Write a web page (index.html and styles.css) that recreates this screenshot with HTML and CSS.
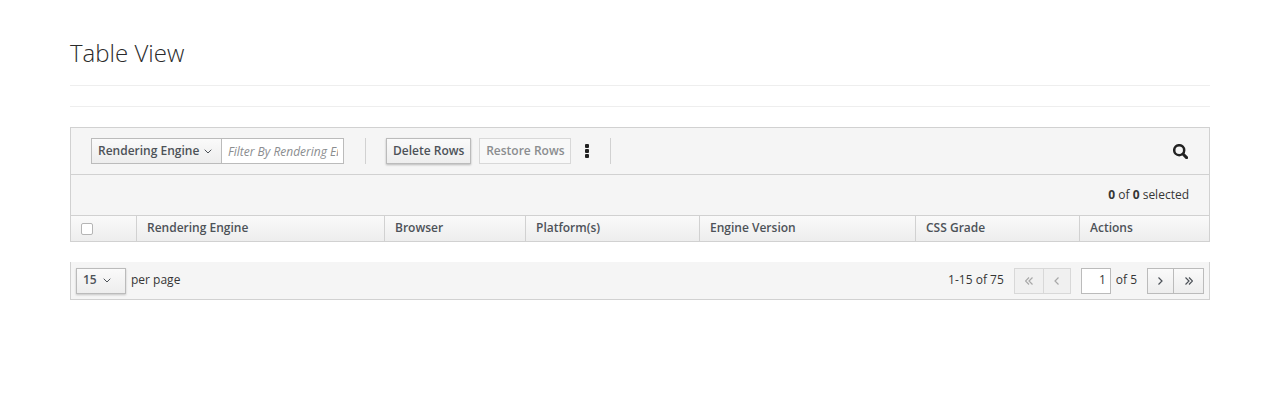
FILE: index.html
```html
<!DOCTYPE html>
<html lang="en">
<head>
    <meta charset="UTF-8">
    <title>Table View</title>
    <link rel="stylesheet" href="styles.css">
</head>
<body>
    <div class="page">
        <h1 class="page-title">Table View</h1>
        <div class="rule"></div>

        <div class="table-view">
            <div class="toolbar">
                <div class="filter">
                    <button class="filter-select">Rendering Engine
                        <svg class="caret" width="8" height="5" viewBox="0 0 8 5"><path d="M.7 .7l3.3 3.3 3.3-3.3" fill="none" stroke="#4d5258" stroke-width="1"/></svg>
                    </button>
                    <input class="filter-input" type="text" placeholder="Filter By Rendering Engine">
                </div>
                <div class="divider"></div>
                <button class="btn btn-active">Delete Rows</button>
                <button class="btn btn-disabled">Restore Rows</button>
                <svg class="kebab" width="4" height="14" viewBox="0 0 4 14"><rect width="4" height="4" rx="1" fill="#222"/><rect y="5" width="4" height="4" rx="1" fill="#222"/><rect y="10" width="4" height="4" rx="1" fill="#222"/></svg>
                <div class="divider"></div>
                <svg class="search" width="15" height="15" viewBox="0 0 15 15"><circle cx="6.2" cy="6.2" r="5" fill="none" stroke="#222" stroke-width="2.5"/><path d="M10 10l3.6 3.6" stroke="#222" stroke-width="3" stroke-linecap="round"/></svg>
            </div>
            <div class="selected-row"><span><b>0</b> of <b>0</b> selected</span></div>
            <div class="table-head">
                <div class="cell cell-check"><span class="checkbox"></span></div>
                <div class="cell cell-engine">Rendering Engine</div>
                <div class="cell cell-browser">Browser</div>
                <div class="cell cell-platform">Platform(s)</div>
                <div class="cell cell-version">Engine Version</div>
                <div class="cell cell-grade">CSS Grade</div>
                <div class="cell cell-actions">Actions</div>
            </div>
        </div>

        <div class="pagination">
            <button class="per-page">15
                <svg class="caret" width="8" height="5" viewBox="0 0 8 5"><path d="M.7 .7l3.3 3.3 3.3-3.3" fill="none" stroke="#4d5258" stroke-width="1"/></svg>
            </button>
            <span class="per-page-label">per page</span>
            <span class="range">1-15 of 75</span>
            <div class="pager pager-off">
                <button class="pager-first"><svg width="8" height="8" viewBox="0 0 8 8"><path d="M4 .5L.5 4 4 7.5M7.5 .5L4 4l3.5 3.5" fill="none" stroke="#a8a8a8" stroke-width="1.2"/></svg></button>
                <button class="pager-prev"><svg width="5" height="8" viewBox="0 0 5 8"><path d="M4.5 .5L1 4l3.5 3.5" fill="none" stroke="#a8a8a8" stroke-width="1.2"/></svg></button>
            </div>
            <input class="page-input" type="text" value="1">
            <span class="page-total">of 5</span>
            <div class="pager">
                <button class="pager-next"><svg width="5" height="8" viewBox="0 0 5 8"><path d="M.5 .5L4 4 .5 7.5" fill="none" stroke="#4d5258" stroke-width="1.2"/></svg></button>
                <button class="pager-last"><svg width="8" height="8" viewBox="0 0 8 8"><path d="M.5 .5L4 4 .5 7.5M4 .5L7.5 4 4 7.5" fill="none" stroke="#4d5258" stroke-width="1.2"/></svg></button>
            </div>
        </div>
    </div>
</body>
</html>
```

FILE: styles.css
```css
body {
    margin: 0;
    background-color: #fff;
    color: #363636;
    font-family: "Open Sans", sans-serif;
    font-size: 12px;
    overflow: hidden;
}

button {
    font-family: inherit;
    font-size: 12px;
    cursor: default;
}

.page {
    padding: 0 70px;
}

.page-title {
    margin: 0;
    height: 86px;
    box-sizing: border-box;
    padding-top: 36px;
    font-size: 24px;
    line-height: 33px;
    font-weight: 300;
    color: #2b2b2b;
    border-bottom: 1px solid #eee;
}

.rule {
    height: 20px;
    border-bottom: 1px solid #eee;
    margin-bottom: 20px;
}

.table-view {
    border: 1px solid #d1d1d1;
    background-color: #f5f5f5;
}

.toolbar {
    display: flex;
    align-items: center;
    height: 46px;
    padding: 0 20px;
    border-bottom: 1px solid #d1d1d1;
}

.filter {
    display: flex;
    height: 26px;
    border: 1px solid #bbb;
    box-sizing: border-box;
}

.filter-select {
    width: 130px;
    padding: 0 0 2px 6px;
    border: 0;
    border-right: 1px solid #bbb;
    background: linear-gradient(#fafafa, #ededed);
    color: #4d5258;
    font-weight: 600;
    text-align: left;
    white-space: nowrap;
}

.caret {
    margin-left: 2px;
    vertical-align: 1px;
}

.filter-input {
    width: 121px;
    box-sizing: border-box;
    padding: 1px 5px 0 6px;
    border: 0;
    background-color: #fff;
    font-family: inherit;
    font-size: 12px;
    font-style: italic;
    outline: none;
}

.filter-input::placeholder {
    color: #8b8d8f;
    opacity: 1;
}

.divider {
    width: 1px;
    height: 26px;
    margin: 0 20px 0 21px;
    background-color: #d1d1d1;
}

.btn {
    height: 26px;
    padding: 0 6px 2px;
    border: 1px solid #bbb;
    font-weight: 600;
    white-space: nowrap;
}

.btn-active {
    background: linear-gradient(#fafafa, #ededed);
    color: #4d5258;
    box-shadow: 0 1px 2px rgba(0, 0, 0, 0.25);
}

.btn-disabled {
    width: 92px;
    margin-left: 8px;
    padding: 0 0 2px;
    border-color: #d8d8d8;
    background-color: #f8f8f8;
    color: #8b8d8f;
}

.kebab {
    margin-left: 14px;
}

.search {
    margin: 1px 1px 0 auto;
}

.selected-row {
    display: flex;
    justify-content: flex-end;
    align-items: center;
    height: 38px;
    padding: 0 20px 2px 0;
    border-bottom: 1px solid #d1d1d1;
}

.selected-row b {
    font-weight: 700;
}

.table-head {
    display: flex;
    height: 25px;
    background: linear-gradient(#fafafa, #ededed);
}

.cell {
    display: flex;
    align-items: center;
    box-sizing: border-box;
    padding: 0 0 2px 10px;
    border-left: 1px solid #d1d1d1;
    color: #4d5258;
    font-weight: 600;
    white-space: nowrap;
}

.cell-check {
    width: 65px;
    padding-bottom: 0;
    border-left: 0;
}

.cell-engine { width: 248px; }
.cell-browser { width: 141px; }
.cell-platform { width: 174px; }
.cell-version { width: 216px; }
.cell-grade { width: 164px; }
.cell-actions { flex: 1; }

.checkbox {
    width: 10px;
    height: 10px;
    border: 1px solid #b5b5b5;
    border-radius: 2px;
    background-color: #fff;
}

.pagination {
    display: flex;
    align-items: center;
    height: 37px;
    margin-top: 20px;
    padding: 0 5px;
    background-color: #f5f5f5;
    border: 1px solid #d1d1d1;
    border-top: 0;
}

.per-page {
    width: 50px;
    height: 26px;
    padding: 0 0 2px 6px;
    border: 1px solid #bbb;
    background: linear-gradient(#fafafa, #ededed);
    color: #4d5258;
    font-weight: 600;
    text-align: left;
    box-shadow: 0 1px 2px rgba(0, 0, 0, 0.2);
}

.per-page .caret {
    margin-left: 3px;
}

.per-page-label {
    margin: 0 0 2px 5px;
}

.range {
    margin: 0 10px 2px auto;
}

.pager {
    display: flex;
    height: 26px;
    border: 1px solid #bbb;
    box-sizing: border-box;
}

.pager button {
    display: flex;
    align-items: center;
    justify-content: center;
    padding: 0;
    border: 0;
    background: linear-gradient(#fafafa, #ededed);
}

.pager button + button {
    border-left: 1px solid #bbb;
}

.pager-first { width: 28px; }
.pager-prev { width: 27px; }
.pager-next { width: 25px; }
.pager-last { width: 30px; }

.pager-off {
    border-color: #d8d8d8;
}

.pager-off button {
    background: #f0f0f0;
}

.pager-off button + button {
    border-left-color: #d8d8d8;
}

.page-input {
    width: 30px;
    height: 26px;
    box-sizing: border-box;
    margin-left: 10px;
    padding: 0 4px 2px;
    border: 1px solid #bbb;
    background-color: #fff;
    color: #363636;
    font-family: inherit;
    font-size: 12px;
    text-align: right;
    outline: none;
}

.page-total {
    margin: 0 10px 2px 5px;
}
```
